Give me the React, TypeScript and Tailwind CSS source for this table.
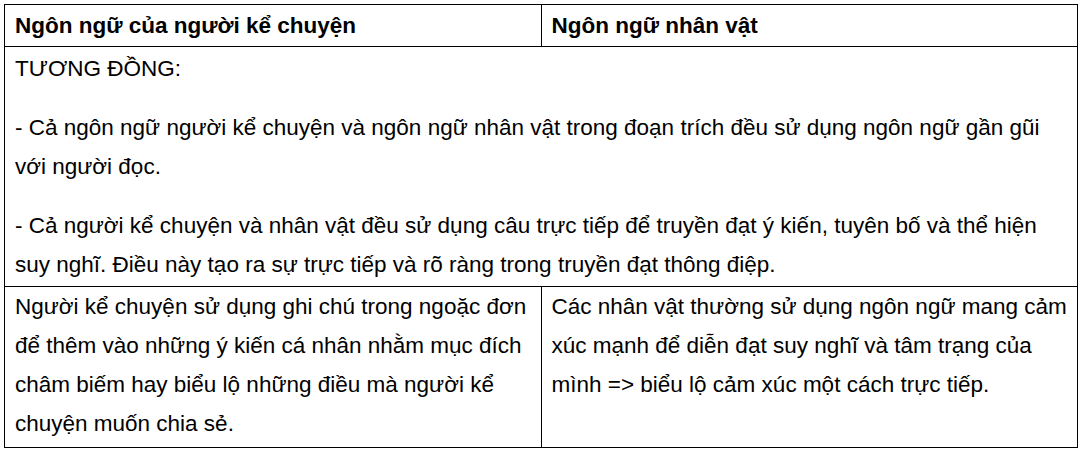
export default function App() {
  return (
    <div className="w-[1082px] h-[452px] bg-white pl-[4px] pt-[4px]" style={{ fontFamily: '"Liberation Sans", Arial, sans-serif' }}>
      <table className="w-[1074px] border-collapse text-black text-[22.5px] leading-[39px]">
        <colgroup>
          <col className="w-[537px]" />
          <col className="w-[537px]" />
        </colgroup>
        <tbody>
          <tr>
            <td className="border border-black px-[10px] pt-[1px] pb-[1px] font-bold text-[22.5px] align-top">Ngôn ngữ của người kể chuyện</td>
            <td className="border border-black px-[10px] pt-[1px] pb-[1px] font-bold text-[22.5px] align-top">Ngôn ngữ nhân vật</td>
          </tr>
          <tr>
            <td colSpan={2} className="border border-black px-[10px] pt-[2px] pb-[2px] align-top">
              <p>TƯƠNG ĐỒNG:</p>
              <p className="mt-[20px]">- Cả ngôn ngữ người kể chuyện và ngôn ngữ nhân vật trong đoạn trích đều sử dụng ngôn ngữ gần gũi với người đọc.</p>
              <p className="mt-[20px]">- Cả người kể chuyện và nhân vật đều sử dụng câu trực tiếp để truyền đạt ý kiến, tuyên bố và thể hiện suy nghĩ. Điều này tạo ra sự trực tiếp và rõ ràng trong truyền đạt thông điệp.</p>
            </td>
          </tr>
          <tr>
            <td className="border border-black px-[10px] pt-0 pb-[4px] align-top">Người kể chuyện sử dụng ghi chú trong ngoặc đơn để thêm vào những ý kiến cá nhân nhằm mục đích châm biếm hay biểu lộ những điều mà người kể chuyện muốn chia sẻ.</td>
            <td className="border border-black px-[10px] pt-0 pb-[4px] align-top">Các nhân vật thường sử dụng ngôn ngữ mang cảm xúc mạnh để diễn đạt suy nghĩ và tâm trạng của mình =&gt; biểu lộ cảm xúc một cách trực tiếp.</td>
          </tr>
        </tbody>
      </table>
    </div>
  );
}
